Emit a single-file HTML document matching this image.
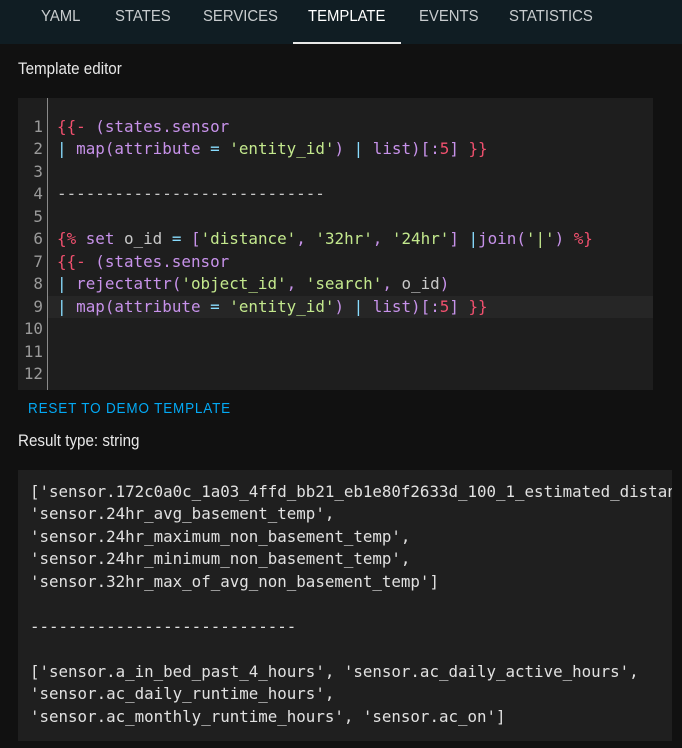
<!DOCTYPE html>
<html><head><meta charset="utf-8"><style>
*{margin:0;padding:0;box-sizing:border-box}
body{width:682px;height:748px;background:#111111;overflow:hidden;position:relative;font-family:"Liberation Sans",sans-serif;color:#e1e1e1}
.hdr{position:absolute;left:0;top:0;width:682px;height:44px;background:#101d23}
.tab{position:absolute;top:8px;font-size:16px;color:#c8ccce;transform:scaleX(0.93);transform-origin:left}
.tab.act{color:#fff}
.ul{position:absolute;left:293px;top:42px;width:108px;height:2px;background:#e8e8e8}
.lbl{position:absolute;left:18px;font-size:16.5px;color:#e8e8e8;transform:scaleX(0.92);transform-origin:left}
.ed{position:absolute;left:18px;top:98px;width:635px;height:292px;background:#1e1e1e}
.gut{position:absolute;left:0;top:0;width:30px;height:292px;border-right:1px solid #8a8a8a;background:#1e1e1e}
.mono{font-family:"DejaVu Sans Mono","Liberation Mono",monospace;font-size:15.9px;white-space:pre;line-height:22.45px}
.nums{position:absolute;left:0;top:116px;width:43px;text-align:right;color:#9a9a9a}
.code{position:absolute;left:57px;top:116px;color:#c792ea}
.hl{position:absolute;left:48px;top:296px;width:605px;height:22px;background:#262626}
.r{color:#f0506e}.p{color:#c792ea}.s{color:#c3e88d}.c{color:#89ddff}.w{color:#c8c8c8}
.reset{position:absolute;left:28px;top:401px;font-size:14.5px;color:#03a9f4;letter-spacing:0.9px;transform:scaleX(0.93);transform-origin:left}
.res{position:absolute;left:18px;top:470px;width:654px;height:271px;background:#1f1f1f;overflow:hidden}
.rt{position:absolute;left:12px;top:11px;color:#e1e1e1;font-size:15.8px}
</style></head><body>
<div class="hdr">
<span class="tab" style="left:41px">YAML</span>
<span class="tab" style="left:115px">STATES</span>
<span class="tab" style="left:203px">SERVICES</span>
<span class="tab act" style="left:308px">TEMPLATE</span>
<span class="tab" style="left:419px">EVENTS</span>
<span class="tab" style="left:509px">STATISTICS</span>
<div class="ul"></div>
</div>
<div class="lbl" style="top:60px">Template editor</div>
<div class="ed"><div class="gut"></div></div>
<div class="hl"></div>
<div class="mono nums">1
2
3
4
5
6
7
8
9
10
11
12</div>
<div class="mono code"><span class="r">{{-</span> (states.sensor
<span class="c">|</span> map(attribute <span class="c">=</span> <span class="s">'entity_id'</span>) <span class="c">|</span> list)[:<span class="r">5</span>] <span class="r">}}</span>

<span class="w">----------------------------</span>

<span class="r">{%</span> set <span class="w">o_id</span> <span class="c">=</span> [<span class="s">'distance'</span>, <span class="s">'32hr'</span>, <span class="s">'24hr'</span>] <span class="c">|</span>join(<span class="s">'|'</span>) <span class="r">%}</span>
<span class="r">{{-</span> (states.sensor
<span class="c">|</span> rejectattr(<span class="s">'object_id'</span>, <span class="s">'search'</span>, <span class="w">o_id</span>)
<span class="c">|</span> map(attribute <span class="c">=</span> <span class="s">'entity_id'</span>) <span class="c">|</span> list)[:<span class="r">5</span>] <span class="r">}}</span></div>
<div class="reset">RESET TO DEMO TEMPLATE</div>
<div class="lbl" style="top:432px">Result type: string</div>
<div class="res"><div class="mono rt">['sensor.172c0a0c_1a03_4ffd_bb21_eb1e80f2633d_100_1_estimated_distance',
'sensor.24hr_avg_basement_temp',
'sensor.24hr_maximum_non_basement_temp',
'sensor.24hr_minimum_non_basement_temp',
'sensor.32hr_max_of_avg_non_basement_temp']

----------------------------

['sensor.a_in_bed_past_4_hours', 'sensor.ac_daily_active_hours',
'sensor.ac_daily_runtime_hours',
'sensor.ac_monthly_runtime_hours', 'sensor.ac_on']</div></div>
</body></html>
